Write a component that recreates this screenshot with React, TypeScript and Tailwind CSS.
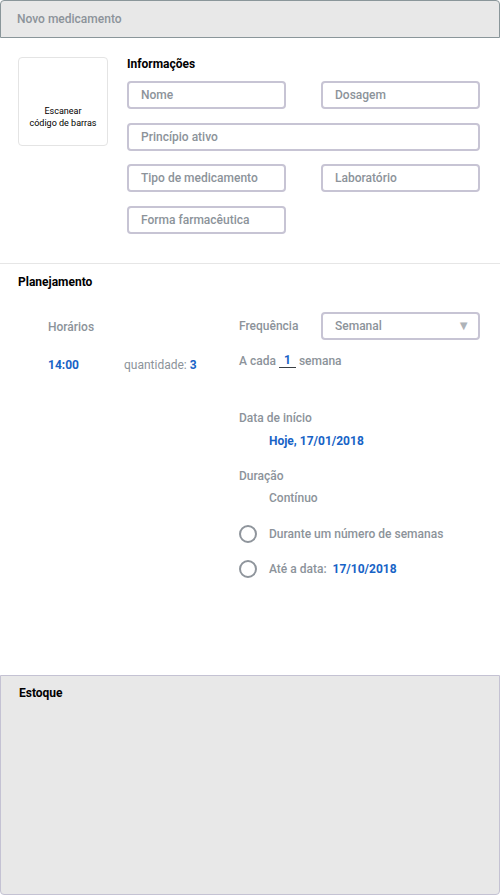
// Tela de cadastro: novo medicamento
const BLUE = "text-[#1763c6]";

function Field({ label, className = "" }: { label: string; className?: string }) {
  return (
    <div
      className={
        "h-[28px] rounded-[4px] border-2 border-[#c7c4d4] flex items-center pl-[12px] text-[12px] font-medium text-[#8c939a] " +
        className
      }
    >
      {label}
    </div>
  );
}

function Radio({ children }: { children: React.ReactNode }) {
  return (
    <div className="flex items-center h-[18px]">
      <span className="w-[18px] h-[18px] rounded-full border-2 border-[#8f959c] mr-[12px]" />
      <span className="text-[12px] font-medium text-[#8c939a]">{children}</span>
    </div>
  );
}

export default function App() {
  return (
    <div className="w-[500px] h-[895px] flex flex-col bg-white font-['Roboto',sans-serif]">
      {/* cabeçalho */}
      <header className="h-[38px] shrink-0 bg-[#e8e8e8] border border-[#8a969a] rounded-t-[4px] flex items-center pl-[16px]">
        <span className="text-[12px] font-medium text-[#8c939a]">Novo medicamento</span>
      </header>

      {/* informações */}
      <section className="flex pl-[18px] pr-[20px] pt-[19px] pb-[29px] border-b border-[#e6e6e6]">
        <div className="w-[90px] h-[89px] shrink-0 rounded-[4px] border border-[#e4e4e4] flex items-end justify-center pb-[16px]">
          <p className="text-[9px] leading-[12px] text-center text-black">
            Escanear
            <br />
            código de barras
          </p>
        </div>
        <div className="ml-[19px] flex-1">
          <h2 className="text-[12px] font-bold text-black leading-[14px]">Informações</h2>
          <div className="mt-[10px] grid grid-cols-[159px_159px] justify-between gap-y-[13.5px]">
            <Field label="Nome" />
            <Field label="Dosagem" />
            <Field label="Princípio ativo" className="col-span-2" />
            <Field label="Tipo de medicamento" />
            <Field label="Laboratório" />
            <Field label="Forma farmacêutica" />
          </div>
        </div>
      </section>

      {/* planejamento */}
      <section className="flex-1 pl-[18px] pr-[20px] pt-[11px]">
        <h2 className="text-[12px] font-bold text-black leading-[14px]">Planejamento</h2>
        <div className="mt-[23px] pl-[30px] grid grid-cols-[191px_1fr]">
          <div className="pt-[8px]">
            <div className="text-[12px] font-medium text-[#8c939a] leading-[14px]">Horários</div>
            <div className="mt-[24px] flex items-center text-[12px] leading-[14px]">
              <span className={"font-bold w-[76px] " + BLUE}>14:00</span>
              <span className="text-[#8c939a]">
                quantidade: <span className={"font-bold " + BLUE}>3</span>
              </span>
            </div>
          </div>
          <div>
            <div className="flex items-center">
              <span className="w-[82px] text-[12px] font-medium text-[#8c939a]">Frequência</span>
              <div className="h-[28px] w-[159px] rounded-[4px] border-2 border-[#c7c4d4] flex items-center justify-between pl-[12px] pr-[8px] text-[12px] font-medium text-[#8c939a]">
                Semanal
                <span className="text-[13px] leading-none text-[#aeb3b8]">▼</span>
              </div>
            </div>
            <div className="mt-[14px] flex items-center text-[12px] font-medium text-[#8c939a] leading-[14px]">
              A cada
              <span className={"mx-[3px] w-[17px] border-b border-[#3a3f44] text-center font-bold leading-[13px] " + BLUE}>1</span>
              semana
            </div>

            <div className="mt-[43px] text-[12px] font-medium text-[#8c939a] leading-[14px]">Data de início</div>
            <div className={"mt-[9px] pl-[30px] text-[12px] font-bold leading-[14px] " + BLUE}>Hoje, 17/01/2018</div>

            <div className="mt-[21px] text-[12px] font-medium text-[#8c939a] leading-[14px]">Duração</div>
            <div className="mt-[8px] pl-[30px] text-[12px] font-medium text-[#8c939a] leading-[14px]">Contínuo</div>

            <div className="mt-[20px] flex flex-col gap-[17px]">
              <Radio>Durante um número de semanas</Radio>
              <Radio>
                Até a data: <span className={"ml-[3px] font-bold " + BLUE}>17/10/2018</span>
              </Radio>
            </div>
          </div>
        </div>
      </section>

      {/* estoque */}
      <section className="h-[220px] shrink-0 bg-[#e8e8e8] border border-[#c4c2d3] rounded-b-[4px] pl-[18px] pt-[10px]">
        <h2 className="text-[12px] font-bold text-black leading-[14px]">Estoque</h2>
      </section>
    </div>
  );
}
